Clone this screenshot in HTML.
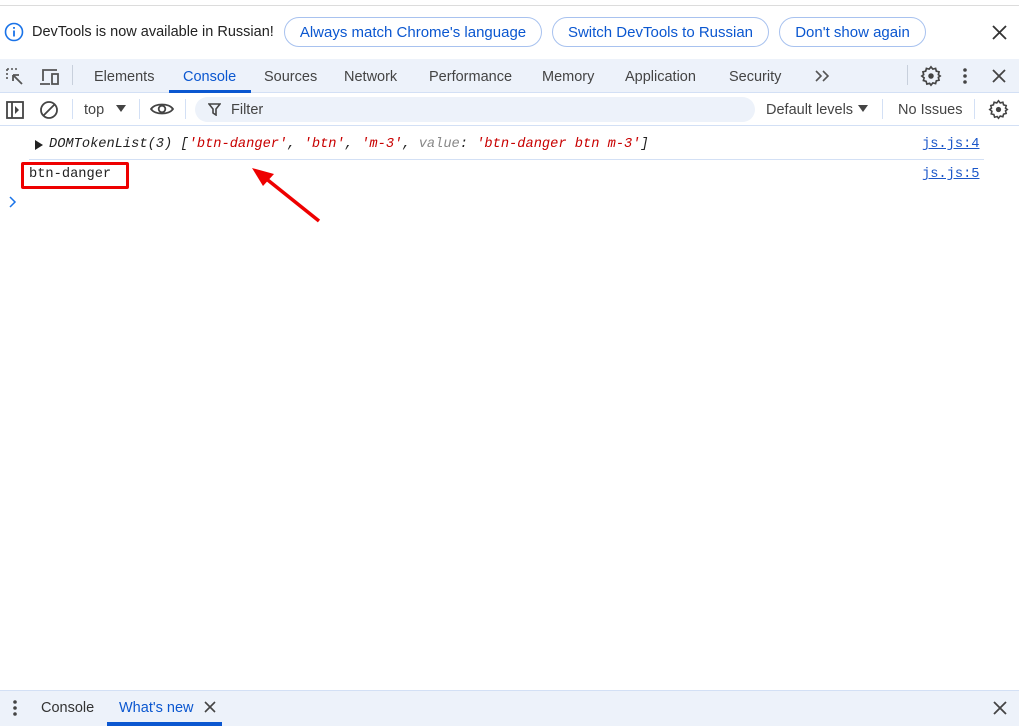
<!DOCTYPE html><html><head><style>
*{box-sizing:border-box;margin:0;padding:0}
body{width:1019px;height:726px;position:relative;background:#fff;font-family:"Liberation Sans",Arial,sans-serif;font-size:14px;color:#1f1f1f;overflow:hidden}
.a{position:absolute;white-space:nowrap}
.btn{position:absolute;top:17px;height:30px;border:1px solid #a8c2ef;border-radius:15px;color:#0b57d0;font-size:15px;line-height:29px;text-align:center}
.tab{position:absolute;top:69px;font-size:14.5px;color:#444}
.mono{font-family:"Liberation Mono",monospace;font-size:13.7px}
.link{color:#1a56c9;text-decoration:underline}
svg{position:absolute}
</style></head><body>
<div class="a" style="top:5px;left:0;width:1019px;height:1px;background:#dcdcdc"></div>
<svg style="left:4px;top:22px" width="20" height="20" viewBox="0 0 20 20"><circle cx="10" cy="10" r="8.5" fill="none" stroke="#1a73e8" stroke-width="1.6"/><rect x="9.1" y="8.5" width="1.8" height="6" fill="#1a73e8"/><rect x="9.1" y="5" width="1.8" height="1.8" fill="#1a73e8"/></svg>
<div class="a" style="left:32px;top:24px;font-size:14.5px;color:#222">DevTools is now available in Russian!</div>
<div class="btn" style="left:284px;width:258px">Always match Chrome's language</div>
<div class="btn" style="left:552px;width:217px">Switch DevTools to Russian</div>
<div class="btn" style="left:779px;width:147px">Don't show again</div>
<svg style="left:992px;top:25px" width="15" height="15" viewBox="0 0 15 15"><path d="M1 1L14 14M14 1L1 14" stroke="#333" stroke-width="1.8"/></svg>
<div class="a" style="top:59px;left:0;width:1019px;height:34px;background:#edf2fa;border-bottom:1px solid #d3e0f5"></div>
<svg style="left:5px;top:67px" width="20" height="20" viewBox="0 0 20 20"><path d="M2 2h11M2 2v11" stroke="#555" stroke-width="1.6" stroke-dasharray="2 2" fill="none"/><path d="M8 8l9 9M8 8h6M8 8v6" stroke="#555" stroke-width="1.8" fill="none"/></svg>
<svg style="left:39px;top:67px" width="22" height="20" viewBox="0 0 22 20"><path d="M4 14V3h14M1 17h10" stroke="#555" stroke-width="1.8" fill="none"/><rect x="13" y="7" width="6" height="10" fill="none" stroke="#555" stroke-width="1.8"/></svg>
<div class="a" style="left:72px;top:65px;width:1px;height:20px;background:#c8d0dc"></div>
<div class="tab" style="left:94px">Elements</div>
<div class="tab" style="left:183px;color:#0b57d0">Console</div>
<div class="a" style="left:169px;top:90px;width:82px;height:3px;background:#0b57d0"></div>
<div class="tab" style="left:264px">Sources</div>
<div class="tab" style="left:344px">Network</div>
<div class="tab" style="left:429px">Performance</div>
<div class="tab" style="left:542px">Memory</div>
<div class="tab" style="left:625px">Application</div>
<div class="tab" style="left:729px">Security</div>
<svg style="left:815px;top:70px" width="16" height="12" viewBox="0 0 16 12"><path d="M1 1l5 5-5 5M8 1l5 5-5 5" fill="none" stroke="#555" stroke-width="1.6"/></svg>
<div class="a" style="left:907px;top:65px;width:1px;height:20px;background:#c8d0dc"></div>
<svg style="left:920px;top:65px" width="22" height="22" viewBox="0 0 24 24"><path d="M12 2l2 2.5 3-.8.8 3 3 .8-.8 3L22 12l-2 1.5.8 3-3 .8-.8 3-3-.8L12 22l-1.5-2-3 .8-.8-3-3-.8.8-3L2 12l2-1.5-.8-3 3-.8.8-3 3 .8z" fill="none" stroke="#444" stroke-width="1.8"/><circle cx="12" cy="12" r="3" fill="#444"/></svg>
<svg style="left:962px;top:67px" width="6" height="18" viewBox="0 0 6 18"><circle cx="3" cy="3" r="1.8" fill="#444"/><circle cx="3" cy="9" r="1.8" fill="#444"/><circle cx="3" cy="15" r="1.8" fill="#444"/></svg>
<svg style="left:992px;top:69px" width="14" height="14" viewBox="0 0 14 14"><path d="M1 1L13 13M13 1L1 13" stroke="#444" stroke-width="1.8"/></svg>
<div class="a" style="top:125px;left:0;width:1019px;height:1px;background:#d3e0f5"></div>
<svg style="left:5px;top:100px" width="20" height="20" viewBox="0 0 20 20"><rect x="2" y="2" width="16" height="16" fill="none" stroke="#444" stroke-width="1.8"/><path d="M7 2v16" stroke="#444" stroke-width="1.8"/><path d="M10 6l4 4-4 4z" fill="#444"/></svg>
<svg style="left:39px;top:100px" width="20" height="20" viewBox="0 0 20 20"><circle cx="10" cy="10" r="8" fill="none" stroke="#444" stroke-width="1.8"/><path d="M4.5 15.5L15.5 4.5" stroke="#444" stroke-width="1.8"/></svg>
<div class="a" style="left:72px;top:99px;width:1px;height:20px;background:#d3e0f5"></div>
<div class="a" style="left:84px;top:102px;font-size:14.5px;color:#444">top</div>
<svg style="left:116px;top:105px" width="10" height="8" viewBox="0 0 10 8"><path d="M0 0h10L5 7z" fill="#444"/></svg>
<div class="a" style="left:139px;top:99px;width:1px;height:20px;background:#d3e0f5"></div>
<svg style="left:150px;top:101px" width="24" height="16" viewBox="0 0 24 16"><path d="M1 8C5 2 19 2 23 8 19 14 5 14 1 8z" fill="none" stroke="#444" stroke-width="1.8"/><circle cx="12" cy="8" r="3.3" fill="none" stroke="#444" stroke-width="1.8"/></svg>
<div class="a" style="left:185px;top:99px;width:1px;height:20px;background:#d3e0f5"></div>
<div class="a" style="left:195px;top:97px;width:560px;height:25px;background:#edf2fa;border-radius:13px"></div>
<svg style="left:208px;top:103px" width="13" height="13" viewBox="0 0 13 13"><path d="M1 1h11L8 6v6L5 10V6z" fill="none" stroke="#444" stroke-width="1.6"/></svg>
<div class="a" style="left:231px;top:102px;font-size:14.5px;color:#444">Filter</div>
<div class="a" style="left:766px;top:102px;font-size:14.5px;color:#444">Default levels</div>
<svg style="left:858px;top:105px" width="10" height="8" viewBox="0 0 10 8"><path d="M0 0h10L5 7z" fill="#444"/></svg>
<div class="a" style="left:882px;top:99px;width:1px;height:20px;background:#d3e0f5"></div>
<div class="a" style="left:898px;top:102px;font-size:14.5px;color:#444">No Issues</div>
<div class="a" style="left:974px;top:99px;width:1px;height:20px;background:#d3e0f5"></div>
<svg style="left:988px;top:99px" width="21" height="21" viewBox="0 0 24 24"><path d="M12 2l2 2.5 3-.8.8 3 3 .8-.8 3L22 12l-2 1.5.8 3-3 .8-.8 3-3-.8L12 22l-1.5-2-3 .8-.8-3-3-.8.8-3L2 12l2-1.5-.8-3 3-.8.8-3 3 .8z" fill="none" stroke="#444" stroke-width="1.8"/><circle cx="12" cy="12" r="3" fill="#444"/></svg>
<svg style="left:35px;top:140px" width="8" height="10" viewBox="0 0 8 10"><path d="M0 0l8 5-8 5z" fill="#222"/></svg>
<div class="a mono" style="left:49px;top:137px;font-style:italic;color:#222">DOMTokenList(3) [<span style="color:#c80000">'btn-danger'</span>, <span style="color:#c80000">'btn'</span>, <span style="color:#c80000">'m-3'</span>, <span style="color:#888">value</span>: <span style="color:#c80000">'btn-danger btn m-3'</span>]</div>
<div class="a mono link" style="left:922px;top:137px">js.js:4</div>
<div class="a" style="top:159px;left:29px;width:955px;height:1px;background:#d3e0f5"></div>
<div class="a mono" style="left:29px;top:167px;color:#222">btn-danger</div>
<div class="a mono link" style="left:922px;top:167px">js.js:5</div>
<div class="a" style="left:21px;top:162px;width:108px;height:27px;border:3px solid #e00;border-radius:2px"></div>
<svg style="left:250px;top:165px" width="75" height="60" viewBox="0 0 75 60"><path d="M69 56L14 12" stroke="#e00" stroke-width="3.5"/><path d="M2 3L24 9 13 21z" fill="#e00"/></svg>
<svg style="left:9px;top:196px" width="8" height="12" viewBox="0 0 8 12"><path d="M1 1l5 5-5 5" fill="none" stroke="#1a73e8" stroke-width="1.5"/></svg>
<div class="a" style="top:690px;left:0;width:1019px;height:36px;background:#edf2fa;border-top:1px solid #d3e0f5"></div>
<svg style="left:12px;top:699px" width="6" height="18" viewBox="0 0 6 18"><circle cx="3" cy="3" r="1.8" fill="#444"/><circle cx="3" cy="9" r="1.8" fill="#444"/><circle cx="3" cy="15" r="1.8" fill="#444"/></svg>
<div class="a" style="left:41px;top:700px;font-size:14.5px;color:#333">Console</div>
<div class="a" style="left:119px;top:700px;font-size:14.5px;color:#0b57d0">What's new</div>
<svg style="left:204px;top:701px" width="12" height="12" viewBox="0 0 12 12"><path d="M1 1L11 11M11 1L1 11" stroke="#444" stroke-width="1.6"/></svg>
<div class="a" style="left:107px;top:722px;width:115px;height:4px;background:#0b57d0"></div>
<svg style="left:993px;top:701px" width="14" height="14" viewBox="0 0 14 14"><path d="M1 1L13 13M13 1L1 13" stroke="#444" stroke-width="1.8"/></svg>
</body></html>
